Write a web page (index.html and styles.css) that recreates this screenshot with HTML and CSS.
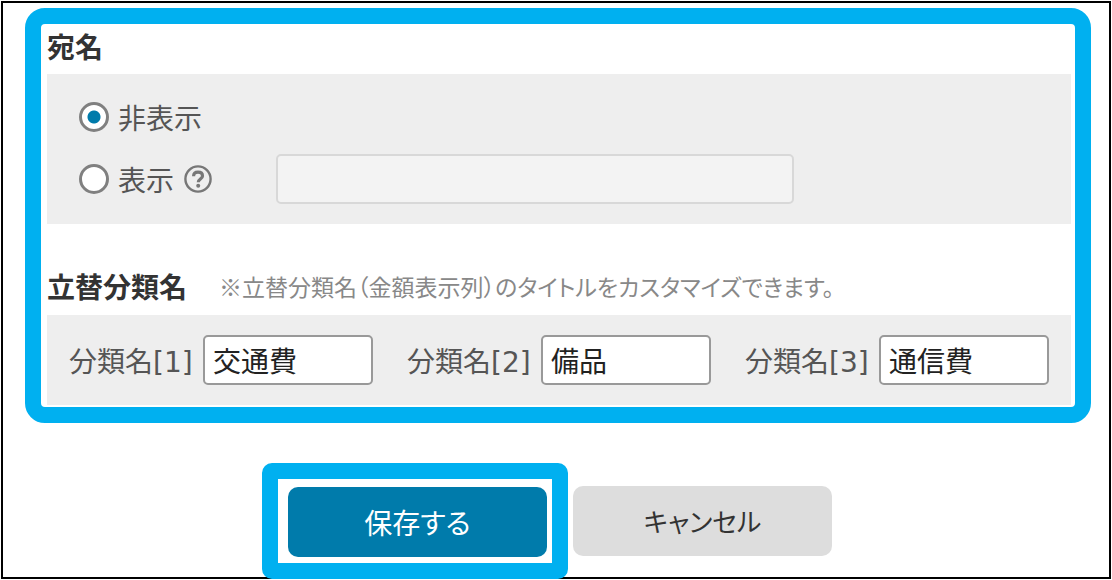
FILE: index.html
```
<!DOCTYPE html>
<html lang="ja">
<head>
    <meta charset="UTF-8">
    <meta name="viewport" content="width=device-width, initial-scale=1.0">
    <title>立替分類名</title>
    <link rel="stylesheet" href="styles.css">
</head>
<body>
    <form class="page">
        <div class="settings">
            <h2 class="title" id="atena">宛名</h2>
            <div class="panel atena" role="radiogroup" aria-labelledby="atena">
                <div class="row">
                    <input type="radio" class="radio" name="atena" id="atena-hide" checked>
                    <label for="atena-hide">非表示</label>
                </div>
                <div class="row">
                    <div class="option">
                        <input type="radio" class="radio" name="atena" id="atena-show">
                        <label for="atena-show">表示</label>
                        <svg class="help" viewBox="0 0 28 28" aria-hidden="true">
                            <circle cx="14" cy="14" r="12.6" fill="none" stroke="#777" stroke-width="2.4"/>
                            <path d="M9.6 11.2C9.6 8.4 11.4 7.2 14 7.2s4.5 1.3 4.5 3.7c0 3.1-4.2 3.2-4.2 6.3" fill="none" stroke="#777" stroke-width="3.2"/>
                            <circle cx="14.2" cy="20.8" r="2" fill="#777"/>
                        </svg>
                    </div>
                    <input type="text" class="text atena-text" aria-label="宛名" disabled>
                </div>
            </div>

            <div class="heading">
                <h2 class="title">立替分類名</h2>
                <p class="note">※立替分類名（金額表示列）のタイトルをカスタマイズできます。</p>
            </div>
            <div class="panel categories">
                <div class="category">
                    <label for="category1">分類名[1]</label>
                    <input type="text" class="text" id="category1" value="交通費">
                </div>
                <div class="category">
                    <label for="category2">分類名[2]</label>
                    <input type="text" class="text" id="category2" value="備品">
                </div>
                <div class="category">
                    <label for="category3">分類名[3]</label>
                    <input type="text" class="text" id="category3" value="通信費">
                </div>
            </div>
        </div>

        <div class="actions">
            <div class="highlight">
                <button type="submit" class="button save">保存する</button>
            </div>
            <button type="button" class="button cancel">キャンセル</button>
        </div>
    </form>
</body>
</html>
```
FILE: styles.css
```
* {
    box-sizing: border-box;
}

body {
    margin: 1px;
    background-color: #fff;
    color: #555;
    font-family: "Noto Sans CJK JP", sans-serif;
    font-size: 28px;
    line-height: 40px;
    font-feature-settings: "palt";
}

.page {
    border: 2px solid #000;
    padding: 5px 18px 0 22px;
}

.settings {
    border: 16px solid #00b0f0;
    border-radius: 20px;
    padding: 2px 4px 2px 6px;
}

.title {
    margin: 0;
    color: #333;
    font-size: 28px;
    line-height: 40px;
}

.panel {
    background-color: #eee;
}

.atena {
    display: flex;
    flex-direction: column;
    gap: 12px;
    margin-top: 8px;
    padding: 18px 32px 20px;
}

.row {
    display: flex;
    align-items: center;
    min-height: 50px;
}

.option {
    display: flex;
    align-items: center;
    width: 197px;
}

.radio {
    appearance: none;
    width: 30px;
    height: 30px;
    margin: 0 9px 0 0;
    border: 3px solid #808080;
    border-radius: 50%;
    background-color: #fff;
}

.radio:checked {
    background-image: radial-gradient(circle, #007bab 6px, #fff 7px);
}

.help {
    width: 28px;
    height: 28px;
    margin-left: 10px;
}

.text {
    width: 170px;
    height: 50px;
    padding: 0 8px;
    border: 2px solid #999;
    border-radius: 5px;
    background-color: #fff;
    color: #222;
    font-family: "Noto Sans CJK JP", sans-serif;
    font-size: 28px;
}

.text:disabled {
    border-color: #d8d8d8;
    background-color: #f3f3f3;
}

.atena-text {
    width: 518px;
}

.heading {
    display: flex;
    align-items: center;
    gap: 32px;
    margin-top: 42px;
}

.note {
    margin: 0;
    color: #888;
    font-size: 23px;
}

.categories {
    display: flex;
    gap: 34px;
    margin-top: 9px;
    padding: 20px 22px;
}

.category {
    display: flex;
    flex: 1;
    align-items: baseline;
    justify-content: space-between;
    font-family: "DejaVu Sans", "Noto Sans CJK JP", sans-serif;
}

.actions {
    display: flex;
    align-items: center;
    justify-content: center;
    gap: 5px;
    margin: 40px 22px -2px 0;
}

/* frame around the save button */
.highlight {
    border: 16px solid #00b0f0;
    border-radius: 10px;
    padding: 8px 5px 6px 10px;
}

.button {
    display: block;
    width: 259px;
    height: 70px;
    border: none;
    border-radius: 10px;
    font: inherit;
    font-feature-settings: inherit;
    cursor: pointer;
}

.save {
    background-color: #007bab;
    color: #fff;
}

.cancel {
    background-color: #ddd;
    color: #333;
    font-size: 26px;
}
```
